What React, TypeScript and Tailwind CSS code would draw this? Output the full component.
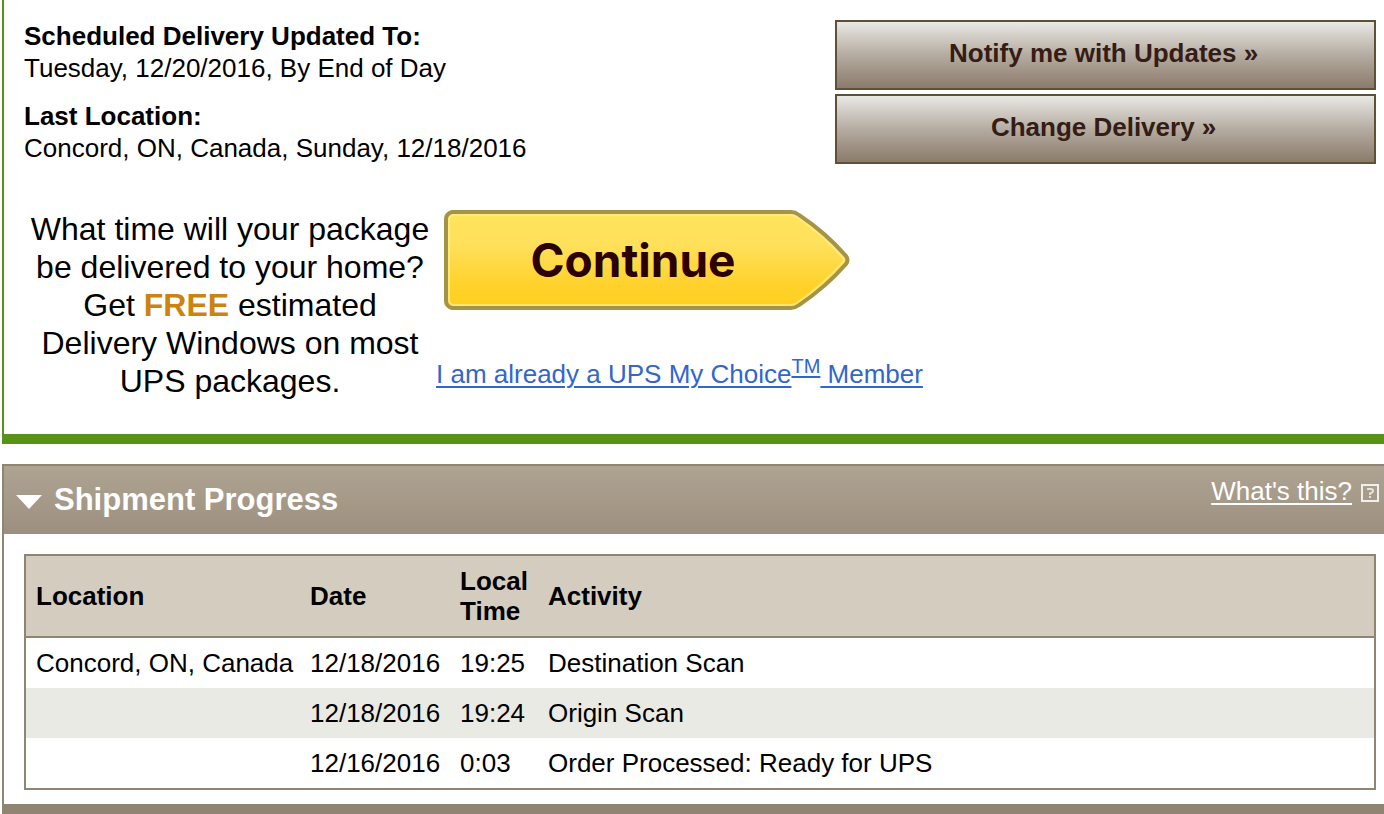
import { useState } from "react";

const activities = [
  {
    location: "Concord, ON, Canada",
    date: "12/18/2016",
    time: "19:25",
    activity: "Destination Scan",
  },
  {
    location: "",
    date: "12/18/2016",
    time: "19:24",
    activity: "Origin Scan",
  },
  {
    location: "",
    date: "12/16/2016",
    time: "0:03",
    activity: "Order Processed: Ready for UPS",
  },
];

function ActionButton({ label }: { label: string }) {
  return (
    <button
      type="button"
      className="h-[70px] w-full cursor-pointer border-2 border-[#5f5137] bg-linear-to-b from-[#e9e9e4] via-[#b5aca1] to-[#8b7b6b] pr-1 pb-1 font-bold text-[#351c15]"
    >
      {label} »
    </button>
  );
}

function ContinueButton() {
  return (
    <button type="button" className="relative block h-[100px] w-[406px] cursor-pointer">
      <svg viewBox="0 0 406 100" className="h-full w-full" aria-hidden="true">
        <defs>
          <linearGradient id="gold" x1="0" y1="0" x2="0" y2="1">
            <stop offset="0" stopColor="#ffe45e" />
            <stop offset="0.35" stopColor="#ffe05a" />
            <stop offset="0.75" stopColor="#ffd22c" />
            <stop offset="1" stopColor="#ffce20" />
          </linearGradient>
        </defs>
        <path
          d="M8 2H347Q351 2 355 5Q382 23 402 46Q405 50 402 54Q382 77 355 95Q351 98 347 98H8Q2 96 2 91V9Q2 4 8 2Z"
          fill="url(#gold)"
          stroke="#a59447"
          strokeWidth="4"
          strokeLinejoin="round"
        />
        <path
          d="M9 5H347Q350 5 353 7Q379 25 399 48Q401 50 399 52Q379 75 353 93Q350 95 347 95H9Q5 94 5 90V10Q5 6 9 5Z"
          fill="none"
          stroke="#fff08c"
          strokeOpacity="0.7"
          strokeWidth="2"
        />
      </svg>
      <span className="absolute inset-0 flex items-center justify-center pr-7 font-[Inter,sans-serif] text-[46px] font-bold text-[#2d0000]">
        Continue
      </span>
    </button>
  );
}

export default function App() {
  const [open, setOpen] = useState(true);

  return (
    <main className="bg-white pl-[2px] font-['Liberation_Sans',Arial,sans-serif] text-[26px] leading-8 text-black">
      <section className="border-b-10 border-l-2 border-[#5a9118] pt-5 pr-2 pb-[34px] pl-5">
        <div className="flex items-start justify-between">
          <dl>
            <dt className="font-bold">Scheduled Delivery Updated To:</dt>
            <dd className="mb-4">Tuesday, 12/20/2016, By End of Day</dd>
            <dt className="font-bold">Last Location:</dt>
            <dd>Concord, ON, Canada, Sunday, 12/18/2016</dd>
          </dl>
          <div className="flex w-2/5 flex-col gap-1">
            <ActionButton label="Notify me with Updates" />
            <ActionButton label="Change Delivery" />
          </div>
        </div>

        <div className="mt-[46px] flex">
          <p className="w-[412px] shrink-0 text-center text-[32px] leading-[38px]">
            What time will your package
            <br />
            be delivered to your home?
            <br />
            Get <strong className="text-[#cc8411]">FREE</strong> estimated
            <br />
            Delivery Windows on most
            <br />
            UPS packages.
          </p>
          <div>
            <div className="pl-2">
              <ContinueButton />
            </div>
            <a href="#member" className="mt-12 block text-[#3366cc]">
              <span className="underline decoration-2 underline-offset-3">I am already a UPS My Choice</span>
              <sup className="text-xl underline decoration-2 underline-offset-3">TM</sup>
              <span className="underline decoration-2 underline-offset-3"> Member</span>
            </a>
          </div>
        </div>
      </section>

      <section className="mt-5 border-t-2 border-b-10 border-l-2 border-[#908473]">
        <header className="flex h-[68px] items-start justify-between bg-linear-to-b from-[#aea492] to-[#9d8f7f] pr-1 pl-3">
          <h2>
            <button
              type="button"
              aria-expanded={open}
              onClick={() => setOpen(!open)}
              className="flex h-[68px] cursor-pointer items-center gap-3 text-[31px] font-bold text-white"
            >
              <svg width="26" height="14" viewBox="0 0 26 14" className="mt-1" aria-hidden="true">
                <path d="M0 0H26L13 14Z" fill="#fff" />
              </svg>
              Shipment Progress
            </button>
          </h2>
          <a href="#help" className="mt-[9px] flex items-center gap-2 text-white">
            <span className="underline decoration-2 underline-offset-3">What's this?</span>
            <svg width="20" height="20" viewBox="0 0 20 20" fill="none" className="mt-1" aria-hidden="true">
              <rect x="2" y="2" width="16" height="16" stroke="#f1efec" strokeWidth="2" />
              <path d="M7 6H11Q13 6 13 8Q13 9.500 10 10.500V12" stroke="#e6e2dc" strokeWidth="2" />
              <path d="M9 13H11V15H9Z" fill="#e6e2dc" />
            </svg>
          </a>
        </header>

        {open && (
          <div className="pt-5 pr-2 pb-[14px] pl-5">
            <table className="w-full table-fixed border-separate border-spacing-0 border-2 border-[#908473] text-left leading-[30px]">
              <thead className="bg-[#d4ccbf]">
                <tr>
                  <th className="w-[274px] border-b-2 border-[#908473] p-[10px]">Location</th>
                  <th className="w-[150px] border-b-2 border-[#908473] p-[10px]">Date</th>
                  <th className="w-[88px] border-b-2 border-[#908473] p-[10px]">
                    Local
                    <br />
                    Time
                  </th>
                  <th className="border-b-2 border-[#908473] p-[10px]">Activity</th>
                </tr>
              </thead>
              <tbody>
                {activities.map((item, index) => (
                  <tr key={index} className="even:bg-[#e9eae3]">
                    <td className="p-[10px] whitespace-nowrap">{item.location}</td>
                    <td className="p-[10px]">{item.date}</td>
                    <td className="p-[10px]">{item.time}</td>
                    <td className="p-[10px]">{item.activity}</td>
                  </tr>
                ))}
              </tbody>
            </table>
          </div>
        )}
      </section>
    </main>
  );
}
